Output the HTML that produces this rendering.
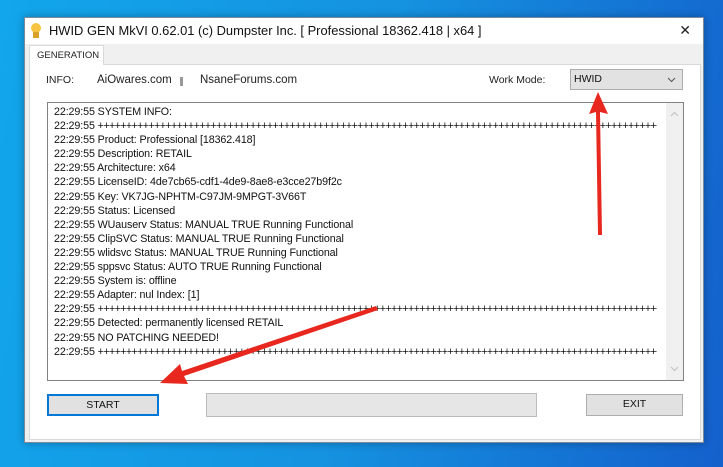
<!DOCTYPE html>
<html><head><style>
*{margin:0;padding:0;box-sizing:border-box}
body{width:723px;height:467px;overflow:hidden;background:linear-gradient(100deg,#12a6ec 0%,#1592e0 50%,#1460cc 100%);font-family:"Liberation Sans",sans-serif;position:relative}
.win{position:absolute;left:24px;top:17px;width:680px;height:426px;background:#f0f0f0;border:1px solid #7a8a9a;box-shadow:0 0 8px rgba(0,0,0,.3)}
.title{position:absolute;left:0;top:0;width:678px;height:26px;background:#fff;font-size:12.9px;color:#111}
.title span{position:absolute;left:24px;top:5px}
.x{position:absolute;right:12px;top:4px;font-size:14px;color:#222}
.tab{position:absolute;left:4px;top:27px;width:75px;height:20px;background:#fff;border:1px solid #d9d9d9;border-bottom:none;font-size:9.5px;color:#222;padding:4px 0 0 7px;z-index:2}
.panel{position:absolute;left:4px;top:46px;width:672px;height:376px;background:#fff;border:1px solid #d9d9d9}
.t{position:absolute;font-size:11.5px;color:#222}
.combo{position:absolute;left:545px;top:51px;width:113px;height:21px;background:#e2e2e2;border:1px solid #adadad;font-size:10.5px;padding:3px 0 0 3px;color:#111}
.log{position:absolute;left:22px;top:84px;width:637px;height:279px;background:#fff;border:1px solid #828282}
.sb{position:absolute;right:0;top:0;width:17px;height:277px;background:#f0f0f0}
.lines{position:absolute;left:6px;top:2px;font-size:10.7px;line-height:14.1px;color:#111;white-space:nowrap;letter-spacing:-0.1px}
.p{display:inline-block;width:559px;overflow:hidden;vertical-align:top;letter-spacing:-0.6px}
.btn{position:absolute;background:#e1e1e1;border:1px solid #adadad;font-size:10.5px;text-align:center;line-height:19px;color:#111}
</style></head><body>
<div class="win">
<div class="title"><svg style="position:absolute;left:5px;top:4px" width="12" height="18" viewBox="0 0 12 18"><circle cx="6" cy="6" r="5" fill="#f6c343"/><rect x="3" y="10" width="6" height="6" fill="#d9a22a"/></svg><span>HWID GEN MkVI 0.62.01 (c) Dumpster Inc. [ Professional 18362.418 | x64 ]</span><div class="x">✕</div></div>
<div class="tab">GENERATION</div>
<div class="panel"></div>
<div class="t" style="left:21px;top:56px;font-size:10.5px">INFO:</div>
<div class="t" style="left:72px;top:56px">AiOwares.com</div>
<div style="position:absolute;left:155px;top:59px;width:3px;height:9px;background:#999"></div>
<div class="t" style="left:175px;top:56px">NsaneForums.com</div>
<div class="t" style="left:464px;top:56px;font-size:10.5px">Work Mode:</div>
<div class="combo">HWID<svg style="position:absolute;right:6px;top:7px" width="9" height="6"><path d="M1 1L4.5 4.5L8 1" stroke="#555" fill="none"/></svg></div>
<div class="log"><div class="sb"><svg style="position:absolute;left:4px;top:8px" width="9" height="6"><path d="M1 5L4.5 1.5L8 5" stroke="#c0c0c0" fill="none"/></svg><svg style="position:absolute;left:4px;bottom:8px" width="9" height="6"><path d="M1 1L4.5 4.5L8 1" stroke="#c0c0c0" fill="none"/></svg></div>
<div class="lines">
22:29:55 SYSTEM INFO:<br>
22:29:55 <span class="p">++++++++++++++++++++++++++++++++++++++++++++++++++++++++++++++++++++++++++++++++++++++++++++++++++++</span><br>
22:29:55 Product: Professional [18362.418]<br>
22:29:55 Description: RETAIL<br>
22:29:55 Architecture: x64<br>
22:29:55 LicenseID: 4de7cb65-cdf1-4de9-8ae8-e3cce27b9f2c<br>
22:29:55 Key: VK7JG-NPHTM-C97JM-9MPGT-3V66T<br>
22:29:55 Status: Licensed<br>
22:29:55 WUauserv Status: MANUAL TRUE Running Functional<br>
22:29:55 ClipSVC Status: MANUAL TRUE Running Functional<br>
22:29:55 wlidsvc Status: MANUAL TRUE Running Functional<br>
22:29:55 sppsvc Status: AUTO TRUE Running Functional<br>
22:29:55 System is: offline<br>
22:29:55 Adapter: nul Index: [1]<br>
22:29:55 <span class="p">++++++++++++++++++++++++++++++++++++++++++++++++++++++++++++++++++++++++++++++++++++++++++++++++++++</span><br>
22:29:55 Detected: permanently licensed RETAIL<br>
22:29:55 NO PATCHING NEEDED!<br>
22:29:55 <span class="p">++++++++++++++++++++++++++++++++++++++++++++++++++++++++++++++++++++++++++++++++++++++++++++++++++++</span>
</div></div>
<div class="btn" style="left:22px;top:376px;width:112px;height:22px;border:2px solid #0078d7">START</div>
<div class="btn" style="left:181px;top:375px;width:331px;height:24px;background:#e6e6e6;border-color:#bcbcbc"></div>
<div class="btn" style="left:561px;top:376px;width:97px;height:22px">EXIT</div>
</div>
<svg style="position:absolute;left:0;top:0" width="723" height="467">
<polygon points="598,235 602,235 600,112 608,114 598,92 589,114 596,112" fill="#e8281e"/>
<polygon points="376,306 378,310 184,376 188,384 160,383 180,364 182,371" fill="#e8281e"/>
</svg>
</body></html>
